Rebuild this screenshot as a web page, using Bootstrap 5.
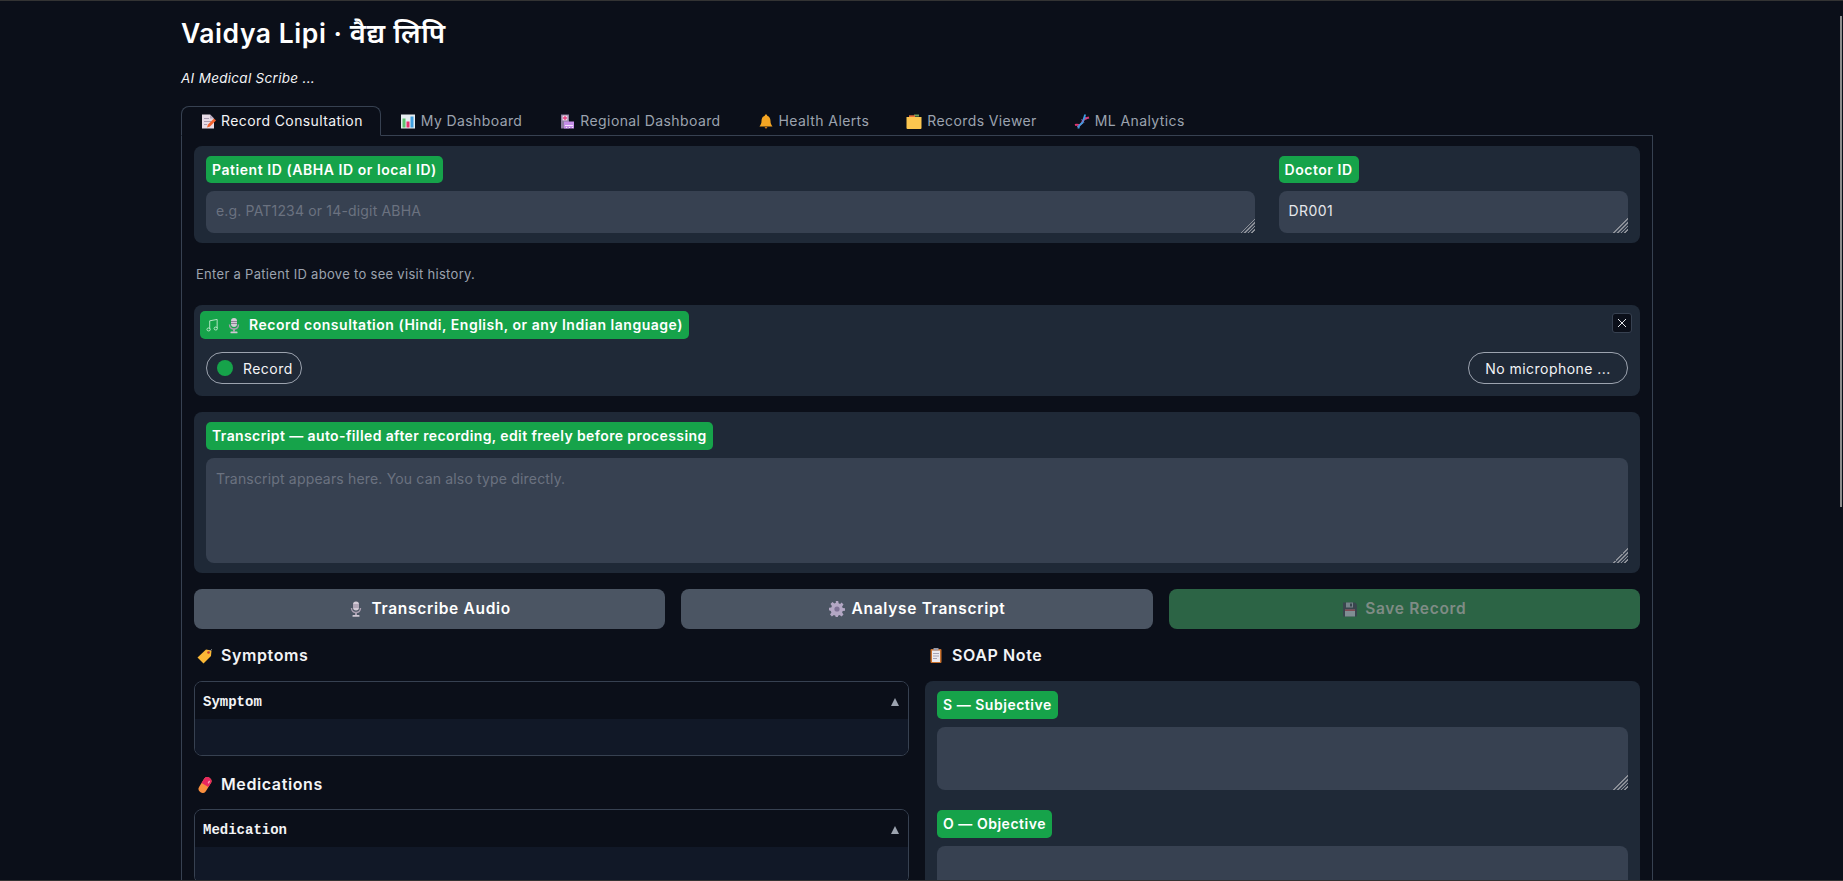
<!DOCTYPE html>
<html lang="en">
<head>
<meta charset="utf-8">
<title>Vaidya Lipi</title>
<link href="https://cdn.jsdelivr.net/npm/bootstrap@5.3.0/dist/css/bootstrap.min.css" rel="stylesheet">
<style>
html,body{height:881px;overflow:hidden;background:#0b0f19}
body{font-family:Inter,"Noto Sans","Noto Sans Devanagari","DejaVu Sans",sans-serif;color:#f3f4f6;font-size:14px;letter-spacing:.45px;border-top:1px solid #333;border-bottom:1px solid #333;position:relative}
.shell{width:1472px;margin-left:181px}
.ttl{font-size:26.500px;font-weight:600;line-height:36px;margin:14px 0 0;color:#fff;letter-spacing:.55px}
.deva{font-size:27.500px}
.sub{font-style:italic;font-size:13.500px;line-height:20px;margin:17px 0 18px;color:#f3f4f6;letter-spacing:.3px}
.tabbar{border-bottom:1px solid #374151;height:30px;margin:0;flex-wrap:nowrap}
.tabitem{display:flex;align-items:center;gap:5px;height:30px;padding:0 17px 0 18px;color:#9ca3af;font-size:14px;line-height:1;border:1px solid transparent;border-radius:8px 8px 0 0;text-decoration:none;background:none;letter-spacing:.4px}
.tabitem.on{color:#f3f4f6;border-color:#374151;border-bottom-color:#0b0f19}
.tabpane{border:1px solid #374151;border-top:0;padding:10px 12px 0}
.blk{background:#1f2937;border-radius:8px;padding:10px 12px}
.tag{display:inline-block;background:#16a34a;color:#fff;font-weight:600;font-size:14px;line-height:28px;height:28px;padding:0 6px;border-radius:5px;margin-bottom:8px;letter-spacing:.52px;white-space:nowrap}
.tag-top{height:27px;letter-spacing:.55px}
.tag-long{letter-spacing:.39px}
.fld{display:block;width:100%;background:#374151;border:0;border-radius:8px;color:#e5e7eb;font:inherit;padding:10px;outline:0;color-scheme:dark;letter-spacing:.4px}
.fld::placeholder{color:#6b7280;opacity:1;letter-spacing:.17px}
.fld::-webkit-resizer{background:linear-gradient(135deg,transparent 50%,#8b8f97 50% 55%,transparent 55% 62%,#8b8f97 62% 67%,transparent 67% 74%,#8b8f97 74% 79%,transparent 79% 86%,#8b8f97 86% 91%,transparent 91%)}
.fld-s{height:42px;resize:both;line-height:20px}
.fld-t{height:105px;resize:vertical}
.fld-m{height:63px;resize:vertical}
.w3{flex:3 1 0;min-width:0}.w1{flex:1 1 0;min-width:0}
.hint{color:#9ca3af;font-size:13px;line-height:20px;margin:21px 2px 21px;letter-spacing:.3px}
.recblk{position:relative;padding:6px 12px 12px 6px;height:91px;margin-bottom:16px}
.tag-rec{height:28px;line-height:28px;display:inline-flex;align-items:center;gap:7px;margin-bottom:13px}
.closer{position:absolute;top:8px;right:8px;width:20px;height:20px;padding:0;border:1px solid #374151;border-radius:3px;background:#0b0f19;display:flex;align-items:center;justify-content:center}
.pill{height:32px;border:1px solid #9ca3af;border-radius:16px;background:transparent;color:#f3f4f6;font-size:14px;display:inline-flex;align-items:center;padding:0;letter-spacing:.45px}
.pill-rec{width:96px;padding-left:10px;gap:10px;margin-left:6px}
.pill-mic{width:160px;justify-content:center}
.dot{width:16px;height:16px;border-radius:50%;background:#16a34a;display:block}
.act{height:40px;border-radius:8px;border:0;font-weight:600;font-size:15.500px;color:#fff;background:#4b5563;width:100%;display:flex;align-items:center;justify-content:center;gap:7px;letter-spacing:.7px}
.act-save{background:#2c6445;color:#7f8c85}
.act-save svg{opacity:.75}
.hdg{font-size:16px;font-weight:600;line-height:21px;margin:0 0 15px 3px;display:flex;align-items:center;gap:8px;color:#f3f4f6;letter-spacing:.6px}
.dtab{width:100%;border:1px solid #374151;border-radius:8px;overflow:hidden;margin-bottom:18px}
.dtab + .hdg{margin-bottom:14px}
.dhead{height:37px;background:#0b0f19;display:flex;align-items:center;justify-content:space-between;padding:3px 8px 0 8px;font-family:"Liberation Mono",monospace;font-weight:700;font-size:14px;letter-spacing:0;color:#f3f4f6}
.dhead i{font-style:normal;font-size:0;width:0;height:0;border-left:4px solid transparent;border-right:4px solid transparent;border-bottom:8px solid #9ca3af;margin-right:1px}
.dbody{height:36px;background:#111827}
.soap{padding:10px 12px}
.soap .fld{margin-bottom:20px}
.thumb{position:absolute;right:1px;top:15px;width:2px;height:491px;background:#8c8c8c}
.ico{flex:none;display:block}
</style>
</head>
<body>
<svg width="0" height="0" class="position-absolute">
<defs>
<symbol id="memo" viewBox="0 0 16 16"><path d="M2 1h8l4 4v10H2z" fill="#e7dbe6"/><path d="M10 1l4 4h-4z" fill="#b9a8bd"/><path d="M4 5h5M4 8h7M4 11h3" stroke="#a99bb0" stroke-width="1"/><path d="M7 14l1-3 6-6 2 2-6 6z" fill="#f2622e"/></symbol>
<symbol id="bars" viewBox="0 0 16 16"><rect x="1" y="1" width="14" height="14" fill="#e6ecf0"/><rect x="2.500" y="5" width="3" height="9" fill="#5cc46e"/><rect x="6.500" y="8" width="3" height="6" fill="#e8336f"/><rect x="10.500" y="3" width="3" height="11" fill="#3f9fe0"/></symbol>
<symbol id="hosp" viewBox="0 0 16 16"><rect x="2" y="1" width="8" height="14" fill="#8d7fa0"/><rect x="3.500" y="2" width="5" height="5" fill="#f0d8e8"/><path d="M6 2.500v4M4 4.500h4" stroke="#e8407f" stroke-width="1.300"/><rect x="5" y="8" width="10" height="7" fill="#c58ee8"/><path d="M6 12h8M7 14h1M10 14h1M13 14h1" stroke="#f3e3fa" stroke-width="1"/></symbol>
<symbol id="bell" viewBox="0 0 16 16"><path d="M8 1c.8 0 1.200.6 1.200 1.200C11.400 3 12.500 5 12.500 7.500c0 2.500.8 3.800 2 5.500h-13c1.200-1.700 2-3 2-5.500C3.500 5 4.600 3 6.800 2.200 6.800 1.600 7.200 1 8 1z" fill="#f5a623"/><path d="M6.500 13.500h3L8 15.500z" fill="#c9781a"/></symbol>
<symbol id="fold" viewBox="0 0 16 16"><path d="M8 1h5v2H8z" fill="#6fa05c"/><path d="M3 1.800h6v2.500H3z" fill="#e8703a"/><path d="M.5 3.500h15v11a1 1 0 0 1-1 1h-13a1 1 0 0 1-1-1z" fill="#fcc64f"/></symbol>
<symbol id="dna" viewBox="0 0 16 16"><path d="M1 11.500C5 10 6 14 8 9s4-4 7-5" fill="none" stroke="#e0356f" stroke-width="1.900"/><path d="M4.500 15C4 10.500 8.500 11 9 8s2-5 2-7" fill="none" stroke="#3d9be0" stroke-width="1.900"/><path d="M3 12.500l1.500 1M7.500 6l2.500 3M11 4l2 1.500" stroke="#8f6fbf" stroke-width="1"/></symbol>
<symbol id="tagi" viewBox="0 0 16 16"><path d="M9 1.500l5.500 1-.5 5.500-7.500 7.500-6-6z" fill="#fbb836"/><circle cx="11.500" cy="4.500" r="1.300" fill="#c0392b"/><path d="M12 4l3-3" stroke="#8a8a8a" stroke-width=".8"/></symbol>
<symbol id="pill" viewBox="0 0 16 16"><g transform="rotate(32 8 8)"><rect x="4" y="-.5" width="8" height="17" rx="4" fill="#f98f3e"/><path d="M4 8V3.500a4 4 0 0 1 8 0V8z" fill="#e8275f"/><rect x="9" y="2" width="1.500" height="3" rx=".7" fill="#f8a0b8"/></g></symbol>
<symbol id="clip" viewBox="0 0 16 16"><rect x="2.500" y="1.500" width="11" height="14" rx="1" fill="#c9702c"/><rect x="4" y="3" width="8" height="11.500" fill="#eceaf0"/><rect x="5.500" y=".5" width="5" height="2.500" fill="#9a9aa8"/><path d="M5 6h6M5 8.500h6M5 11h4" stroke="#a6a4b4" stroke-width="1"/></symbol>
<symbol id="flop" viewBox="0 0 16 16"><path d="M1 1h12l2 2v12H1z" fill="#3e3d52"/><rect x="4" y="1" width="7" height="5" fill="#8e8ea2"/><rect x="8" y="2" width="2" height="3" fill="#3e3d52"/><rect x="3" y="8" width="10" height="7" fill="#9c9cae"/><rect x="3" y="8" width="10" height="1.300" fill="#a03048"/></symbol>
<symbol id="mic" viewBox="0 0 16 16"><rect x="5" y="0.500" width="6" height="9" rx="3" fill="#d3cbd6"/><path d="M5 4h6M5 6h6" stroke="#8f8398" stroke-width="1"/><path d="M3.500 7c0 3 2 4.500 4.500 4.500S12.500 10 12.500 7" fill="none" stroke="#a99fb0" stroke-width="1.400"/><rect x="7" y="11.500" width="2" height="2.500" fill="#a99fb0"/><rect x="4.500" y="14" width="7" height="1.800" rx=".6" fill="#cfc7d3"/></symbol>
<symbol id="gear" viewBox="0 0 16 16"><path d="M6.800 0h2.400l.4 2.300 1.500.6L12.600 1.500l1.900 1.900-1.400 2 .6 1.500 2.300.4v2.400l-2.300.4-.6 1.500 1.400 2-1.900 1.900-2-1.400-1.500.6-.4 2.300H6.800l-.4-2.300-1.500-.6-2 1.400-1.900-1.900 1.400-2-.6-1.500L0 9.200V6.800l2.300-.4.6-1.500-1.400-2 1.900-1.900 2 1.400 1.500-.6z" fill="#b3a7c4"/><circle cx="8" cy="8" r="2.600" fill="#7f7396"/></symbol>
</defs>
</svg>
<div class="shell">
<h1 class="ttl">Vaidya Lipi · <span class="deva">वैद्य लिपि</span></h1>
<p class="sub">AI Medical Scribe ...</p>
<ul class="nav tabbar">
<li class="nav-item"><a class="tabitem on" href="#"><svg class="ico" width="16" height="17"><use href="#memo"/></svg>Record Consultation</a></li>
<li class="nav-item"><a class="tabitem" href="#"><svg class="ico" width="16" height="17"><use href="#bars"/></svg>My Dashboard</a></li>
<li class="nav-item"><a class="tabitem" href="#"><svg class="ico" width="16" height="17"><use href="#hosp"/></svg>Regional Dashboard</a></li>
<li class="nav-item"><a class="tabitem" href="#"><svg class="ico" width="16" height="17"><use href="#bell"/></svg>Health Alerts</a></li>
<li class="nav-item"><a class="tabitem" href="#"><svg class="ico" width="16" height="17"><use href="#fold"/></svg>Records Viewer</a></li>
<li class="nav-item"><a class="tabitem" href="#"><svg class="ico" width="16" height="17"><use href="#dna"/></svg>ML Analytics</a></li>
</ul>
<div class="tabpane">
<div class="blk d-flex gap-4">
<div class="w3"><span class="tag tag-top">Patient ID (ABHA ID or local ID)</span><textarea class="fld fld-s" placeholder="e.g. PAT1234 or 14-digit ABHA"></textarea></div>
<div class="w1"><span class="tag tag-top">Doctor ID</span><textarea class="fld fld-s">DR001</textarea></div>
</div>
<p class="hint">Enter a Patient ID above to see visit history.</p>
<div class="blk recblk">
<span class="tag tag-rec"><svg class="ico" width="13" height="14" viewBox="0 0 14 15"><path d="M4 12V3l8-1.500V11" fill="none" stroke="#bfe8cc" stroke-width="1"/><ellipse cx="2.800" cy="12.300" rx="1.800" ry="1.600" fill="none" stroke="#bfe8cc"/><ellipse cx="10.500" cy="11.300" rx="1.800" ry="1.600" fill="none" stroke="#bfe8cc"/></svg><svg class="ico" width="16" height="17"><use href="#mic"/></svg>Record consultation (Hindi, English, or any Indian language)</span>
<button class="closer" type="button" aria-label="Close"><svg width="10" height="10" viewBox="0 0 10 10"><path d="M1 1l8 8M9 1l-8 8" stroke="#e5e7eb" stroke-width="1"/></svg></button>
<div class="d-flex justify-content-between align-items-center">
<button class="pill pill-rec" type="button"><span class="dot"></span>Record</button>
<button class="pill pill-mic" type="button">No microphone ...</button>
</div>
</div>
<div class="blk mb-3">
<span class="tag tag-long">Transcript — auto-filled after recording, edit freely before processing</span>
<textarea class="fld fld-t" placeholder="Transcript appears here. You can also type directly."></textarea>
</div>
<div class="row g-3 mb-3">
<div class="col-4"><button class="act" type="button"><svg class="ico" width="16" height="18"><use href="#mic"/></svg>Transcribe Audio</button></div>
<div class="col-4"><button class="act" type="button"><svg class="ico" width="16" height="16"><use href="#gear"/></svg>Analyse Transcript</button></div>
<div class="col-4"><button class="act act-save" type="button" disabled><svg class="ico" width="16" height="17"><use href="#flop"/></svg>Save Record</button></div>
</div>
<div class="row g-3">
<div class="col-6">
<div class="hdg"><svg class="ico" width="16" height="16"><use href="#tagi"/></svg>Symptoms</div>
<div class="dtab"><div class="dhead">Symptom<i></i></div><div class="dbody"></div></div>
<div class="hdg"><svg class="ico" width="16" height="16"><use href="#pill"/></svg>Medications</div>
<div class="dtab"><div class="dhead">Medication<i></i></div><div class="dbody"></div></div>
</div>
<div class="col-6">
<div class="hdg"><svg class="ico" width="16" height="17"><use href="#clip"/></svg>SOAP Note</div>
<div class="blk soap">
<span class="tag">S — Subjective</span>
<textarea class="fld fld-m"></textarea>
<span class="tag">O — Objective</span>
<textarea class="fld fld-m"></textarea>
</div>
</div>
</div>
</div>
</div>
<div class="thumb"></div>
<script src="https://cdn.jsdelivr.net/npm/bootstrap@5.3.0/dist/js/bootstrap.bundle.min.js"></script>
</body>
</html>
